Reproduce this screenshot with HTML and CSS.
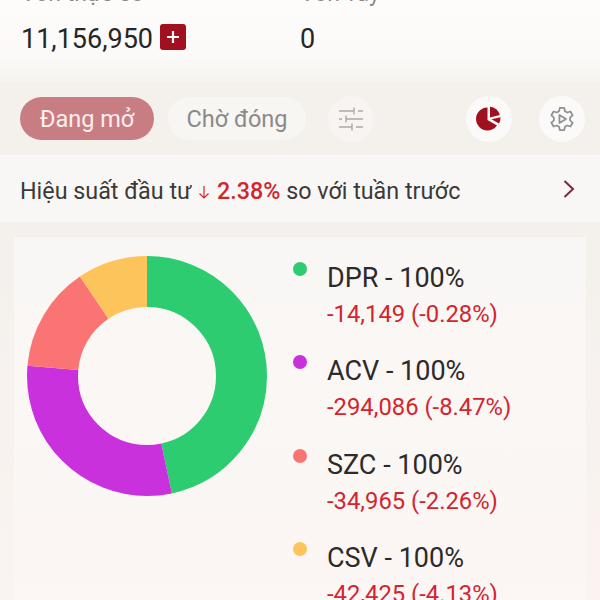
FILE: index.html
```html
<!DOCTYPE html>
<html lang="en">
<head>
    <meta charset="UTF-8">
    <meta name="viewport" content="width=device-width, initial-scale=1.0">
    <title>Danh mục</title>
    <link rel="stylesheet" href="styles.css">
</head>
<body>
    <section class="capital">
        <div class="capital-col capital-own">
            <div class="capital-label">Vốn thực có</div>
            <div class="capital-value">
                11,156,950
                <span class="add-btn">
                    <svg width="14" height="14" viewBox="0 0 14 14"><path d="M7 1v12M1 7h12" stroke="#fff" stroke-width="2.2"/></svg>
                </span>
            </div>
        </div>
        <div class="capital-col">
            <div class="capital-label">Vốn vay</div>
            <div class="capital-value">0</div>
        </div>
    </section>

    <nav class="toolbar">
        <button class="pill pill-active">Đang mở</button>
        <button class="pill pill-wait">Chờ đóng</button>
        <button class="round-btn round-filter">
            <svg width="26" height="26" viewBox="0 0 26 26" fill="none" stroke="#b3a5a3" stroke-width="1.400">
                <path d="M1 5h15M16 1.500v7M20 5h5M1 13h3M8 9.500v7M8 13h17M1 21h13M14 17.500v7M18 21h7"/>
            </svg>
        </button>
        <button class="round-btn round-pie">
            <svg width="26" height="26" viewBox="0 0 26 26" fill="#a0101f">
                <path d="M11.500 1.500A11.500 11.500 0 1 0 21 19.500L11.500 14z"/>
                <path d="M14 .800A11.500 11.500 0 0 1 23.800 9L14 11.500z"/>
                <path d="M24.500 11.200A11.500 11.500 0 0 1 23 17.500L15.500 13.300z"/>
            </svg>
        </button>
        <button class="round-btn">
            <svg width="28" height="28" viewBox="0 0 38 38" fill="none" stroke="#8f9195" stroke-width="2.400" stroke-linejoin="round">
                <path d="M16 4h6l1 4.500 3 1.700 4.400-1.400 3 5.200-3.400 3.100v3.800l3.400 3.100-3 5.200-4.400-1.400-3 1.700-1 4.500h-6l-1-4.500-3-1.700-4.400 1.400-3-5.200 3.400-3.100v-3.800l-3.400-3.100 3-5.200 4.400 1.400 3-1.700z"/>
                <path d="M15.500 13.500v11l9-5.500z"/>
            </svg>
        </button>
    </nav>

    <a class="perf-row">
        <span class="perf-text">
            Hiệu suất đầu tư
            <svg class="perf-arrow" width="12" height="14" viewBox="0 0 12 14" fill="none" stroke="#d3252f" stroke-width="1.200"><path d="M6 1v12M1.500 8.500 6 13l4.500-4.500"/></svg>
            <strong class="perf-num">2.38%</strong> so với tuần trước
        </span>
        <svg width="14" height="20" viewBox="0 0 14 20" fill="none" stroke="#7c2a3a" stroke-width="2"><path d="M2.500 2 11 10l-8.500 8"/></svg>
    </a>

    <section class="chart-card">
        <svg class="donut" width="240" height="240" viewBox="0 0 240 240" fill="none" stroke-width="51">
            <g transform="rotate(-90 120 120)">
                <circle cx="120" cy="120" r="94.500" pathLength="360" stroke="#2ecc71" stroke-dasharray="168 192"/>
                <circle cx="120" cy="120" r="94.500" pathLength="360" stroke="#c931dd" stroke-dasharray="107 253" stroke-dashoffset="-168"/>
                <circle cx="120" cy="120" r="94.500" pathLength="360" stroke="#fb7474" stroke-dasharray="51 309" stroke-dashoffset="-275"/>
                <circle cx="120" cy="120" r="94.500" pathLength="360" stroke="#fdc45c" stroke-dasharray="34 326" stroke-dashoffset="-326"/>
            </g>
        </svg>
        <ul class="legend">
            <li class="legend-item">
                <span class="dot dot-green"></span>
                <div>
                    <div class="legend-name">DPR - 100%</div>
                    <div class="legend-val">-14,149 (-0.28%)</div>
                </div>
            </li>
            <li class="legend-item">
                <span class="dot dot-purple"></span>
                <div>
                    <div class="legend-name">ACV - 100%</div>
                    <div class="legend-val">-294,086 (-8.47%)</div>
                </div>
            </li>
            <li class="legend-item">
                <span class="dot dot-red"></span>
                <div>
                    <div class="legend-name">SZC - 100%</div>
                    <div class="legend-val">-34,965 (-2.26%)</div>
                </div>
            </li>
            <li class="legend-item">
                <span class="dot dot-yellow"></span>
                <div>
                    <div class="legend-name">CSV - 100%</div>
                    <div class="legend-val">-42,425 (-4.13%)</div>
                </div>
            </li>
        </ul>
    </section>
</body>
</html>
```

FILE: styles.css
```css
html, body {
    height: 600px;
    overflow: hidden;
}

body {
    margin: 0;
    font-family: Roboto, 'Noto Sans', sans-serif;
    background: linear-gradient(#f4f1ed 0%, #f4f1ed 45%, #fbf3f1 100%);
    color: #2b2b2b;
}

.capital {
    display: flex;
    height: 82px;
    padding-left: 21px;
    background: linear-gradient(#fdfcfb 0%, #fcfaf8 70%, #f6f3f0 100%);
}

.capital-col {
    margin-top: -17px;
}

.capital-own {
    width: 279px;
}

.capital-label {
    font-size: 23px;
    line-height: 22px;
    color: #888;
}

.capital-value {
    display: flex;
    align-items: center;
    gap: 7px;
    margin-top: 19px;
    font-size: 27px;
    line-height: 30px;
    color: #262626;
}

.add-btn {
    display: flex;
    align-items: center;
    justify-content: center;
    width: 26px;
    height: 26px;
    margin-top: -4px;
    border-radius: 3px;
    background-color: #a0101f;
}

.toolbar {
    display: flex;
    align-items: center;
    height: 73px;
    padding-left: 20px;
}

.pill {
    width: 134px;
    height: 43px;
    padding: 0;
    margin-right: 14px;
    border: none;
    border-radius: 22px;
    background-color: #f8f6f3;
    color: #8a8a8a;
    font-family: inherit;
    font-size: 23.500px;
    white-space: nowrap;
}

.pill-active {
    background-color: #c87d82;
    color: #fbeeee;
}

.pill-wait {
    width: 138px;
    margin-right: 22px;
}

.round-btn {
    display: flex;
    align-items: center;
    justify-content: center;
    width: 46px;
    height: 46px;
    padding: 0;
    border: none;
    border-radius: 50%;
    background-color: #fbfaf8;
}

.round-filter {
    margin-right: 92px;
    background-color: #f8f4f1;
}

.round-pie {
    margin-right: 27px;
}

.perf-row {
    display: flex;
    align-items: center;
    justify-content: space-between;
    height: 67px;
    padding: 0 24px 0 20px;
    background-color: #f9f7f5;
}

.perf-text {
    padding-top: 5px;
    font-size: 23.300px;
    color: #3a3a3a;
}

.perf-arrow {
    margin: 0 1px;
}

.perf-num {
    font-weight: 500;
    color: #d3252f;
}

.chart-card {
    display: flex;
    gap: 26px;
    height: 400px;
    margin: 15px 14px 0;
    padding: 19px 0 0 13px;
    background: linear-gradient(#f9f7f5, #fcf6f4);
}

.donut {
    flex-shrink: 0;
}

.legend {
    margin: 0;
    padding: 7px 0 0;
    list-style: none;
}

.legend-item {
    display: flex;
    gap: 20px;
    height: 93.300px;
}

.dot {
    width: 14px;
    height: 14px;
    margin-top: -1px;
    border-radius: 50%;
}

.dot-green { background-color: #2ecc71; }
.dot-purple { background-color: #c931dd; }
.dot-red { background-color: #fb7474; }
.dot-yellow { background-color: #fdc45c; }

.legend-name {
    font-size: 27px;
    line-height: 30px;
    color: #2b2b2b;
}

.legend-val {
    margin-top: 8px;
    font-size: 23.800px;
    line-height: 26px;
    color: #d3252f;
}
```
